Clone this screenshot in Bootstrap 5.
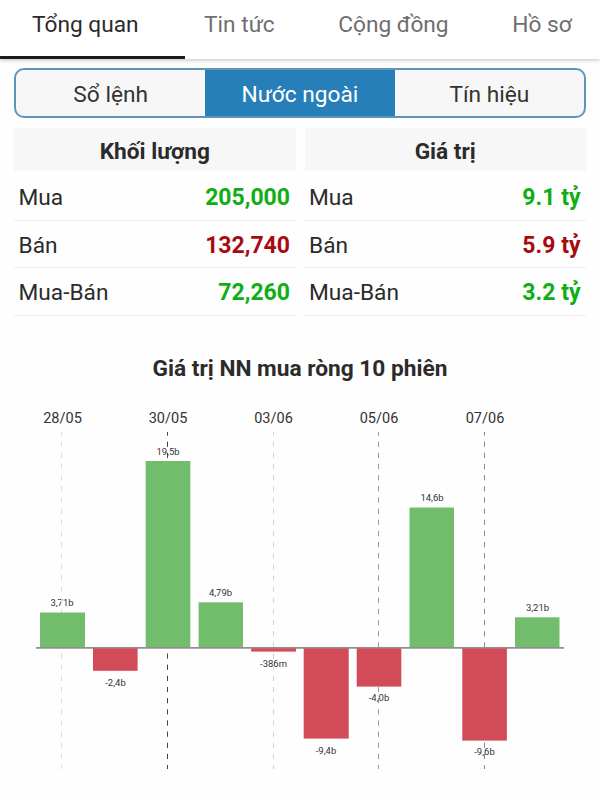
<!DOCTYPE html>
<html lang="vi">
<head>
    <meta charset="UTF-8">
    <meta name="viewport" content="width=device-width, initial-scale=1.0">
    <title>Giao dịch nước ngoài</title>
    <link href="https://cdn.jsdelivr.net/npm/bootstrap@5.3.0/dist/css/bootstrap.min.css" rel="stylesheet">
    <style>
        body {
            font-family: Roboto, "Liberation Sans", sans-serif;
            font-size: 22.7px;
            line-height: 30px;
            color: #2b2b2b;
            background: #fefefe;
            overflow: hidden;
        }
        .top-tabs {
            height: 59px;
            box-shadow: 0 1px 4px rgba(0, 0, 0, 0.25);
            background: #fff;
        }
        .top-tabs .nav-link {
            flex-shrink: 0;
            padding: 10px 0 0 0;
            margin-right: 63.7px;
            color: #6e6e6e;
            white-space: nowrap;
        }
        .top-tabs .nav-link.active {
            width: 185px;
            margin-right: 19px;
            padding-left: 32px;
            color: #2b2b2b;
            border-bottom: 3px solid #1c1c1c;
        }
        .top-tabs .nav-link:last-child {
            margin-right: 0;
        }
        .switcher {
            height: 50px;
            margin: 9px 14px 0;
            border: 2px solid #5e96b6;
            border-radius: 10px;
            background: #f7f7f7;
            overflow: hidden;
        }
        .switcher .btn {
            font-size: 22.7px;
            line-height: 30px;
            color: #333;
            border: 0;
            border-radius: 0;
            padding: 3px 0 0;
        }
        .switcher .btn.active {
            background: #267fb9;
            color: #fff;
        }
        .totals {
            margin: 10px 14px 0;
            gap: 9px;
        }
        .totals-head {
            height: 43px;
            background: #f7f7f7;
            padding-top: 9px;
            margin-bottom: 2px;
        }
        .totals-row {
            height: 47.5px;
            padding: 4px 5.5px 0 4.5px;
            border-bottom: 1px solid #ececec;
        }
        .up {
            color: #0fae14;
        }
        .down {
            color: #a90a10;
        }
        .totals-row .fw-bold {
            font-size: 23px;
        }
        .chart-title {
            margin-top: 38px;
        }
        .chart text {
            text-anchor: middle;
            fill: #333;
        }
        .dates text {
            font-size: 14.5px;
        }
        .values text {
            font-size: 9.5px;
        }
        .guides line {
            stroke-dasharray: 5.2 5.95;
            stroke-dashoffset: 1.5;
        }
    </style>
</head>
<body>
    <nav class="nav flex-nowrap top-tabs">
        <a class="nav-link active" href="#">Tổng quan</a>
        <a class="nav-link" href="#">Tin tức</a>
        <a class="nav-link" href="#">Cộng đồng</a>
        <a class="nav-link" href="#">Hồ sơ</a>
    </nav>

    <div class="switcher d-flex">
        <button class="btn flex-fill w-100">Sổ lệnh</button>
        <button class="btn flex-fill w-100 active">Nước ngoài</button>
        <button class="btn flex-fill w-100">Tín hiệu</button>
    </div>

    <div class="totals d-flex">
        <div class="w-50">
            <div class="totals-head text-center fw-bold">Khối lượng</div>
            <div class="totals-row d-flex justify-content-between align-items-center">
                <span>Mua</span><span class="fw-bold up">205,000</span>
            </div>
            <div class="totals-row d-flex justify-content-between align-items-center">
                <span>Bán</span><span class="fw-bold down">132,740</span>
            </div>
            <div class="totals-row d-flex justify-content-between align-items-center">
                <span>Mua-Bán</span><span class="fw-bold up">72,260</span>
            </div>
        </div>
        <div class="w-50">
            <div class="totals-head text-center fw-bold">Giá trị</div>
            <div class="totals-row d-flex justify-content-between align-items-center">
                <span>Mua</span><span class="fw-bold up">9.1 tỷ</span>
            </div>
            <div class="totals-row d-flex justify-content-between align-items-center">
                <span>Bán</span><span class="fw-bold down">5.9 tỷ</span>
            </div>
            <div class="totals-row d-flex justify-content-between align-items-center">
                <span>Mua-Bán</span><span class="fw-bold up">3.2 tỷ</span>
            </div>
        </div>
    </div>

    <div class="chart-title text-center fw-bold">Giá trị NN mua ròng 10 phiên</div>

    <svg class="chart d-block" width="600" height="400" viewBox="0 384 600 400">
        <g class="dates">
            <text x="62.5" y="423.3">28/05</text>
            <text x="168" y="423.3">30/05</text>
            <text x="273.5" y="423.3">03/06</text>
            <text x="379" y="423.3">05/06</text>
            <text x="485" y="423.3">07/06</text>
        </g>
        <g class="values">
            <text x="62" y="606">3,71b</text>
            <text x="115.5" y="686">-2,4b</text>
            <text x="168" y="454.5">19,5b</text>
            <text x="220.5" y="596">4,79b</text>
            <text x="273.5" y="666.5">-386m</text>
            <text x="326" y="754">-9,4b</text>
            <text x="379" y="701.3">-4,0b</text>
            <text x="432" y="501.3">14,6b</text>
            <text x="484.5" y="755.3">-9,6b</text>
            <text x="537.5" y="611">3,21b</text>
        </g>
        <g class="guides">
            <line x1="61.5" y1="432" x2="61.5" y2="769" stroke="#dcdcdc"/>
            <line x1="167.5" y1="432" x2="167.5" y2="769" stroke="#444"/>
            <line x1="273.5" y1="432" x2="273.5" y2="769" stroke="#d2d2d2"/>
            <line x1="378.5" y1="432" x2="378.5" y2="769" stroke="#999"/>
            <line x1="484.5" y1="432" x2="484.5" y2="769" stroke="#888"/>
        </g>
        <g fill="#72bd6b">
            <rect x="40" y="612.5" width="45" height="35.5"/>
            <rect x="145.7" y="461" width="44.6" height="187"/>
            <rect x="198.6" y="602.3" width="44.4" height="45.7"/>
            <rect x="409.5" y="507.5" width="44.5" height="140.5"/>
            <rect x="515" y="617.3" width="44.5" height="30.7"/>
        </g>
        <path d="M36 647.8H564" stroke="#8f8f8f" stroke-width="1.7"/>
        <g fill="#d14b59">
            <rect x="93" y="648.3" width="44.6" height="22.5"/>
            <rect x="251.2" y="648.3" width="44.8" height="3.3"/>
            <rect x="303.7" y="648.3" width="45" height="90.3"/>
            <rect x="356.7" y="648.3" width="44.6" height="38.3"/>
            <rect x="462.3" y="648.3" width="44.6" height="92.3"/>
        </g>
    </svg>
    <script src="https://cdn.jsdelivr.net/npm/bootstrap@5.3.0/dist/js/bootstrap.bundle.min.js"></script>
</body>
</html>
